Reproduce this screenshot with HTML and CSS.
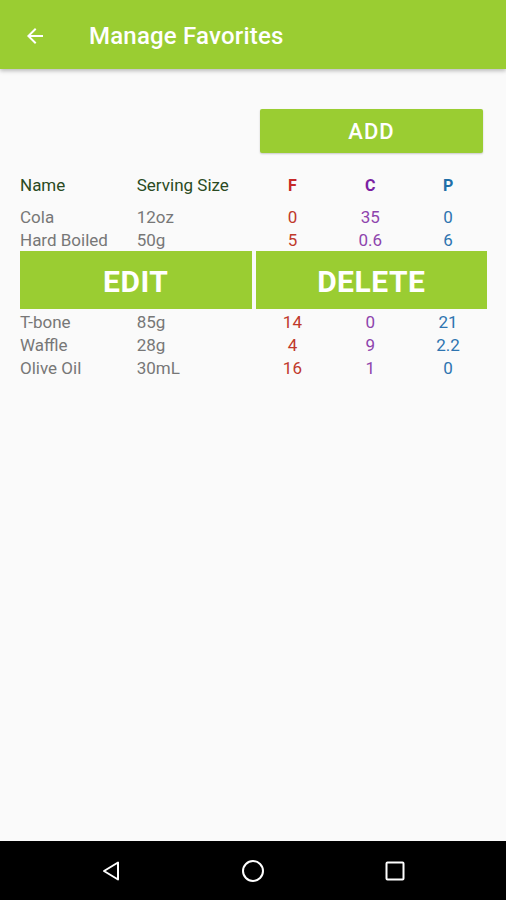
FILE: index.html
```html
<!DOCTYPE html>
<html>
<head>
<meta charset="utf-8">
<link rel="stylesheet" href="styles.css">
</head>
<body>
<div class="screen">
  <header class="appbar">
    <svg class="back" width="24" height="24" viewBox="0 0 24 24"><path d="M20 11H7.83l5.59-5.59L12 4l-8 8 8 8 1.41-1.41L7.83 13H20v-2z" fill="#fff"/></svg>
    <h1 class="title">Manage Favorites</h1>
  </header>
  <main class="content">
    <div class="add-row"><button class="btn add">ADD</button></div>
    <div class="table">
      <div class="row head">
        <span class="c name">Name</span><span class="c size">Serving Size</span><span class="c num f">F</span><span class="c num cc">C</span><span class="c num p">P</span>
      </div>
      <div class="row">
        <span class="c name">Cola</span><span class="c size">12oz</span><span class="c num f">0</span><span class="c num cc">35</span><span class="c num p">0</span>
      </div>
      <div class="row">
        <span class="c name">Hard Boiled</span><span class="c size">50g</span><span class="c num f">5</span><span class="c num cc">0.6</span><span class="c num p">6</span>
      </div>
      <div class="actions">
        <button class="btn big">EDIT</button>
        <button class="btn big">DELETE</button>
      </div>
      <div class="row after">
        <span class="c name">T-bone</span><span class="c size">85g</span><span class="c num f">14</span><span class="c num cc">0</span><span class="c num p">21</span>
      </div>
      <div class="row">
        <span class="c name">Waffle</span><span class="c size">28g</span><span class="c num f">4</span><span class="c num cc">9</span><span class="c num p">2.2</span>
      </div>
      <div class="row">
        <span class="c name">Olive Oil</span><span class="c size">30mL</span><span class="c num f">16</span><span class="c num cc">1</span><span class="c num p">0</span>
      </div>
    </div>
  </main>
  <nav class="navbar">
    <svg width="24" height="24" viewBox="0 0 24 24"><path d="M19 3.5 L19 20.5 L5 12 Z" fill="none" stroke="#fff" stroke-width="2" stroke-linejoin="round"/></svg>
    <svg width="24" height="24" viewBox="0 0 24 24"><circle cx="12" cy="12" r="10" fill="none" stroke="#fff" stroke-width="2"/></svg>
    <svg width="24" height="24" viewBox="0 0 24 24"><rect x="3.5" y="3.5" width="17" height="17" rx="1" fill="none" stroke="#fff" stroke-width="2"/></svg>
  </nav>
</div>
</body>
</html>
```
FILE: styles.css
```css
* { box-sizing: border-box; }
html, body { margin: 0; padding: 0; }
body { font-family: Roboto, "Noto Sans", sans-serif; background: #fafafa; }
.screen { width: 506px; height: 900px; display: flex; flex-direction: column; background: #fafafa; }
.appbar {
  height: 69px; flex: none; background: #9acd32;
  display: flex; align-items: center; padding-left: 23px; padding-top: 2px;
  box-shadow: 0 2px 4px rgba(0,0,0,0.25);
  position: relative; z-index: 1;
}
.back { flex: none; }
.title { margin: 0 0 0 42px; color: #fff; font-size: 24px; font-weight: 500; letter-spacing: 0.2px; }
.content { flex: 1; padding: 40px 19px 0 20px; }
.add-row { display: flex; justify-content: flex-end; padding-right: 4px; }
.btn {
  border: none; background: #9acd32; color: #fff; font-family: Roboto, sans-serif;
  font-weight: 500; cursor: pointer; padding: 0;
}
.add { width: 223px; height: 44px; font-size: 22px; letter-spacing: 1px; border-radius: 2px; box-shadow: 0 1px 2px rgba(0,0,0,0.2); }
.table { margin-top: 20px; }
.row { display: flex; height: 23px; align-items: center; font-size: 17px; color: #777; }
.row.head { height: 24px; margin-bottom: 8px; color: #2a4a22; }
.c { display: block; white-space: nowrap; }
.name, .size { flex: 1.5; }
.num { flex: 1; text-align: center; }
.row .f { color: #c0392b; }
.row .cc { color: #8e44ad; }
.row .p { color: #2e74b0; }
.row.head .num { font-weight: 700; font-size: 16px; }
.row.head .f { color: #c62828; }
.row.head .cc { color: #7b1fa2; }
.row.head .p { color: #1f6fa8; }
.actions { display: flex; gap: 4px; height: 58px; margin-bottom: 1px; }
.big { flex: 1; font-size: 30px; font-weight: 700; letter-spacing: 0.5px; padding-top: 2px; }
.row.after { margin-top: 1px; }
.navbar {
  height: 59px; flex: none; background: #000;
  display: flex; align-items: center; justify-content: center; gap: 118px;
}
```
